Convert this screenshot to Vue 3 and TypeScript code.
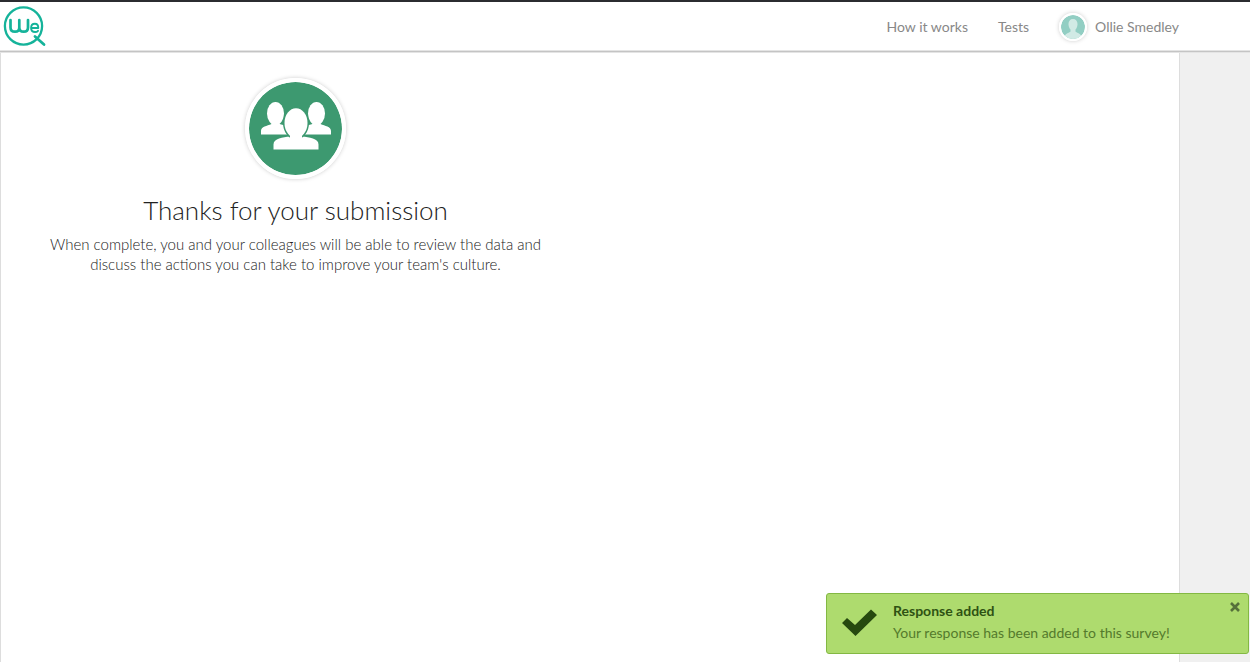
<script setup lang="ts">
import { ref } from 'vue'

interface NavLink {
  label: string
  href: string
}

const links: NavLink[] = [
  { label: 'How it works', href: '#how-it-works' },
  { label: 'Tests', href: '#tests' },
]
const userName = 'Ollie Smedley'
const showNotice = ref(true)
</script>

<template>
  <div class="page">
    <header class="topbar">
      <a class="brand" href="#home" aria-label="WeQ">
        <svg width="43" height="41" viewBox="0 0 43 41" fill="none" stroke="#15b39a" stroke-linecap="round" stroke-linejoin="round">
          <circle cx="20.5" cy="20" r="18.6" stroke-width="2.3" />
          <path d="M32 30.5 L41 38.5" stroke-width="2.8" />
          <path d="M7.5 14 V21.5 Q7.5 25.7 12 25.7 Q16.3 25.7 16.3 21.5 V14 V21.5 Q16.3 25.7 20.7 25.7 Q25 25.7 25 21.5 V14" stroke-width="2.7" />
          <path d="M28.5 22 H35.3 Q35.3 17.8 31.9 17.8 Q28.1 17.8 28.1 22 Q28.1 26 32.1 26 Q34 26 35 24.8" stroke-width="1.9" />
        </svg>
      </a>
      <nav class="nav">
        <a v-for="link in links" :key="link.label" :href="link.href">{{ link.label }}</a>
        <a class="user" href="#profile">
          <svg class="avatar" width="24" height="24" viewBox="0 0 24 24" aria-hidden="true">
            <circle cx="12" cy="12" r="12" fill="#92cec3" />
            <path d="M12 4 C15 4 16.7 6.3 16.5 9.5 C16.3 12 15.5 13.5 14.5 14.5 V16.5 C15.5 18 18.5 17.7 20.2 20.7 A12 12 0 0 1 3.8 20.7 C5.5 17.7 8.5 18 9.5 16.5 V14.5 C8.5 13.5 7.7 12 7.5 9.5 C7.3 6.3 9 4 12 4 Z" fill="#d1eae5" />
          </svg>
          <span>{{ userName }}</span>
        </a>
      </nav>
    </header>

    <main class="panel">
      <section class="message">
        <svg class="badge" width="93" height="93" viewBox="0 0 93 93" aria-hidden="true">
          <circle cx="46.5" cy="46.5" r="46.5" fill="#3d9970" />
          <g fill="#fff">
            <ellipse cx="26.5" cy="31.5" rx="8.5" ry="11.5" />
            <path d="M22.5 39 H30.5 V42 C33 43 35 43 38 44 V52.5 H12 V49 C12 44.5 18 44 22.5 42 Z" />
            <ellipse cx="67.5" cy="31.5" rx="8.5" ry="11.5" />
            <path d="M63.5 39 H71.5 V42 C76 44 82 44.5 82 49 V52.5 H56 V44 C59 43 61 43 63.5 42 Z" />
          </g>
          <g fill="#fff" stroke="#3d9970" stroke-width="3" paint-order="stroke">
            <path d="M41 51 Q47 58 53 51 V54.5 C60 55.5 69.5 56 69.5 62.5 V67.5 H24.5 V62.5 C24.5 56 34 55.5 41 54.5 Z" />
            <ellipse cx="47" cy="41" rx="11.5" ry="14.8" />
          </g>
          <path d="M41 50 H53 V60 H41 Z" fill="#fff" />
        </svg>
        <h1>Thanks for your submission</h1>
        <p>When complete, you and your colleagues will be able to review the data and discuss the actions you can take to improve your team's culture.</p>
      </section>
    </main>

    <div v-if="showNotice" class="notice" role="status">
      <svg class="tick" width="36" height="28" viewBox="0 0 36 28" aria-hidden="true">
        <path d="M0 15 L5 10 L13 17 L29 1.5 L35 7 L13.5 28 Z" fill="#26490f" />
      </svg>
      <div class="copy">
        <strong>Response added</strong>
        <span>Your response has been added to this survey!</span>
      </div>
      <button type="button" class="close" aria-label="Close" @click="showNotice = false">
        <svg width="10" height="10" viewBox="0 0 10 10" stroke="#55703a" stroke-width="2.6" aria-hidden="true">
          <path d="M1 1 L9 9 M9 1 L1 9" />
        </svg>
      </button>
    </div>
  </div>
</template>

<style>
body {
  margin: 0;
  background: #f0f0f0;
}
</style>

<style scoped>
.page {
  display: flex;
  flex-direction: column;
  min-height: 100vh;
  box-sizing: border-box;
  border-top: 2px solid #2b2c30;
  font-family: Lato, "Open Sans", sans-serif;
  color: #222;
}
.topbar {
  position: relative;
  display: flex;
  align-items: center;
  justify-content: space-between;
  height: 49px;
  padding: 0 71px 0 3px;
  background: #fff;
  border-bottom: 1px solid #c4c4c4;
  box-shadow: 0 1px 0 #e4e4e4, inset 0 -1px 0 #e4e4e4;
}
.brand {
  display: flex;
}
.nav {
  display: flex;
  align-items: center;
  gap: 30px;
}
.nav a {
  color: #888;
  font-size: 14px;
  line-height: 20px;
  text-decoration: none;
}
.nav .user {
  display: flex;
  align-items: center;
  gap: 8px;
}
.avatar {
  border: 2px solid #fff;
  border-radius: 50%;
  box-shadow: 0 0 4px #ccc;
}
.panel {
  flex: 1;
  margin-right: 70px;
  background: #fff;
  border: solid #ddd;
  border-width: 0 1px;
}
.message {
  display: flex;
  flex-direction: column;
  align-items: center;
  box-sizing: border-box;
  width: 50%;
  padding: 26px 40px;
  text-align: center;
}
.badge {
  border: 4px solid #fff;
  border-radius: 50%;
  box-shadow: 0 0 4px #ccc;
}
h1 {
  margin: 15px 0 8px;
  font-size: 26px;
  line-height: 32px;
  font-weight: 300;
}
p {
  margin: 0;
  font-size: 15px;
  line-height: 20px;
  font-weight: 300;
}
.notice {
  position: fixed;
  right: 1px;
  bottom: 8px;
  display: flex;
  align-items: center;
  box-sizing: border-box;
  width: 423px;
  min-height: 61px;
  padding: 5px 15px 8px;
  background: #aedb6e;
  border: 1px solid #83b843;
  border-radius: 3px;
}
.copy {
  display: flex;
  flex-direction: column;
  margin-left: 15px;
  font-size: 14px;
  line-height: 22px;
  color: #547a2c;
}
.copy strong {
  color: #2f5213;
}
.close {
  position: absolute;
  top: 8px;
  right: 8px;
  display: flex;
  padding: 0;
  border: 0;
  background: none;
  cursor: pointer;
}
</style>
